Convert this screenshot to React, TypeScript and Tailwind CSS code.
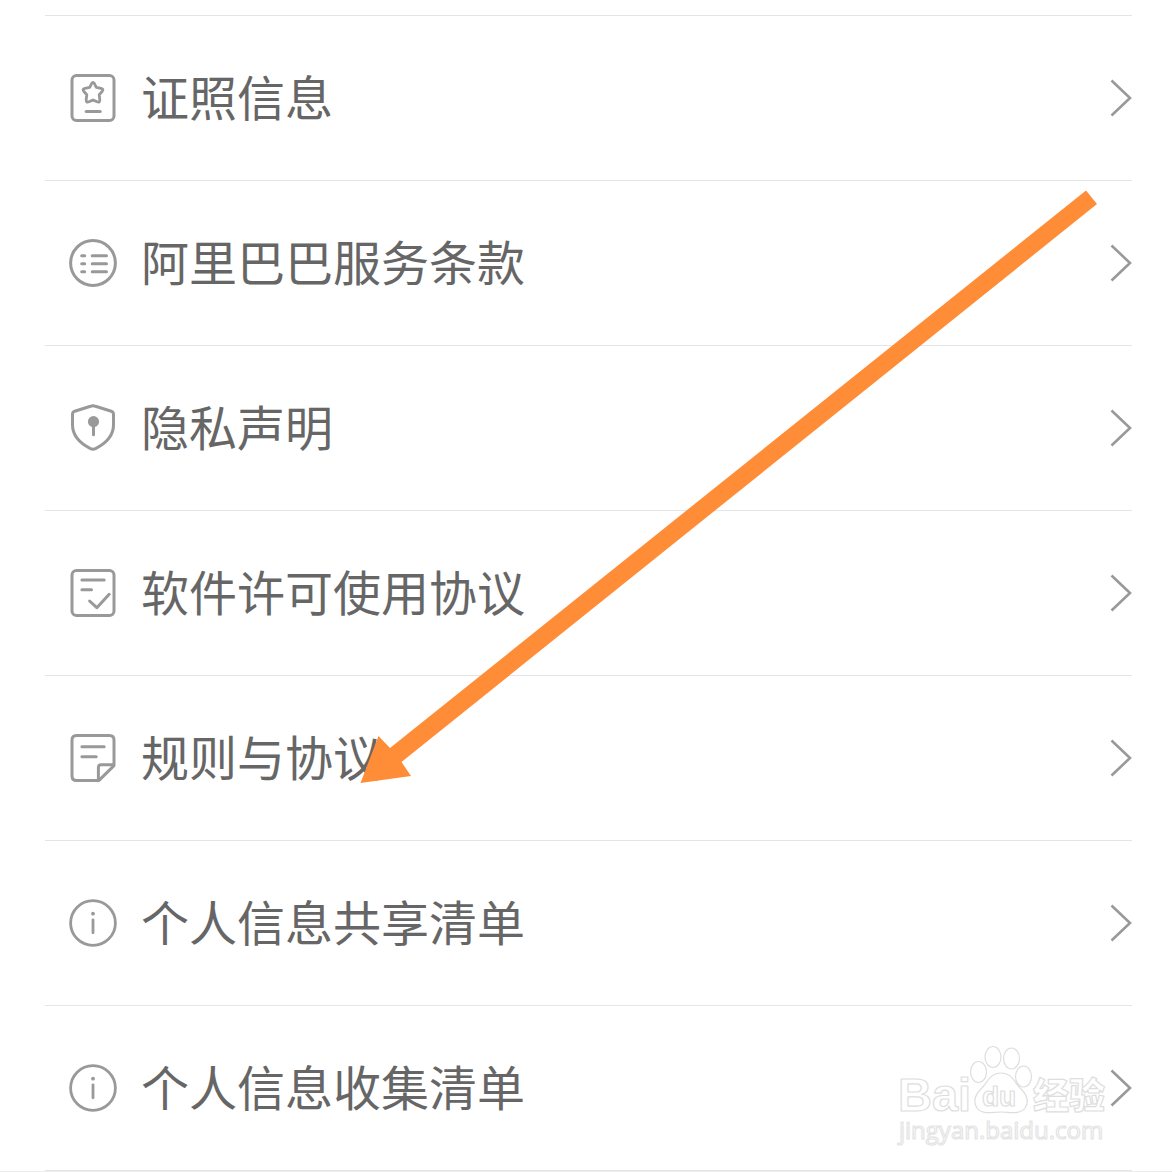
import type { ReactNode } from "react";

type Item = {
  label: string;
  icon: ReactNode;
};

function Icon({ children }: { children: ReactNode }) {
  return (
    <svg
      viewBox="0 0 48 48"
      fill="none"
      stroke="currentColor"
      strokeWidth="3"
      strokeLinecap="round"
      strokeLinejoin="round"
      className="size-12 shrink-0 text-[#999999]"
      aria-hidden="true"
    >
      {children}
    </svg>
  );
}

const licenseIcon = (
  <Icon>
    <rect x="3" y="1.6" width="42" height="44.8" rx="4.5" />
    <path
      strokeWidth="2.8"
      d="M22.7 9.4q1.3-2.2 2.6 0l2 4 4.7.9q3 .7 1.3 2.9l-3.1 3.5.6 5q.1 3.3-2.7 2.1L24 25.9l-4.1 1.9q-2.8 1.2-2.7-2.1l.6-5-3.1-3.5q-1.7-2.2 1.3-2.9l4.7-.9z"
    />
    <path d="M17.2 37.4h14" />
  </Icon>
);

const listIcon = (
  <Icon>
    <circle cx="24" cy="24" r="22.4" />
    <path d="M12.7 16.7h3M23.2 16.7h14.3M12.7 24.7h3M23.2 24.7h14.3M12.7 32.7h3M23.2 32.7h14.3" />
  </Icon>
);

const shieldIcon = (
  <Icon>
    <path d="M21.5 2.3Q24 1.3 26.5 2.3L42.3 7.2Q44.5 8 44.5 10.4V21C44.5 32 36.5 39.5 26.5 44.6Q24 45.8 21.5 44.6C11.5 39.5 3.5 32 3.5 21V10.4Q3.5 8 5.7 7.2Z" />
    <circle cx="24.5" cy="17.6" r="5.6" fill="currentColor" stroke="none" />
    <path d="M24.5 20v10.8" />
  </Icon>
);

const checkIcon = (
  <Icon>
    <rect x="3" y="1.6" width="42" height="44.8" rx="4.5" />
    <path d="M12.9 11.1h22.3M12.9 20.7h9.6M20.6 32l7.2 6.7 12.4-13.4" />
  </Icon>
);

const noteIcon = (
  <Icon>
    <path d="M30 46.4H7.5Q3 46.4 3 41.9V6.1Q3 1.6 7.5 1.6H40.5Q45 1.6 45 6.1V31.6Z" />
    <path d="M29.4 45.5V33.6Q29.4 30.7 32.3 30.7H44.5M12.9 12.7h22.3M12.9 22.7h14.3" />
  </Icon>
);

const infoIcon = (
  <Icon>
    <circle cx="24" cy="24" r="22.4" strokeWidth="2.8" />
    <circle cx="24" cy="14.7" r="1.9" fill="currentColor" stroke="none" />
    <path strokeWidth="2.8" d="M24 20.8v13" />
  </Icon>
);

const items: Item[] = [
  { label: "证照信息", icon: licenseIcon },
  { label: "阿里巴巴服务条款", icon: listIcon },
  { label: "隐私声明", icon: shieldIcon },
  { label: "软件许可使用协议", icon: checkIcon },
  { label: "规则与协议", icon: noteIcon },
  { label: "个人信息共享清单", icon: infoIcon },
  { label: "个人信息收集清单", icon: infoIcon },
];

function Chevron() {
  return (
    <svg
      viewBox="0 0 24 40"
      fill="none"
      stroke="currentColor"
      strokeWidth="2.6"
      className="h-10 w-6 shrink-0 text-[#999999]"
      aria-hidden="true"
    >
      <path d="M3.5 2.5L22 20L3.5 37.5" />
    </svg>
  );
}

function Arrow() {
  return (
    <svg
      viewBox="0 0 740 596"
      className="pointer-events-none absolute left-[359px] top-[189px] h-[596px] w-[740px]"
      aria-hidden="true"
    >
      <path
        fill="#ff8c37"
        d="M1.5 594L19.5 547L31 559L727 1.5L738 15L42.5 573L52 587Z"
      />
    </svg>
  );
}

function Watermark() {
  return (
    <svg
      viewBox="0 0 220 110"
      className="pointer-events-none absolute bottom-[22px] right-[57px] h-[110px] w-[220px]"
      fill="#ffffff"
      stroke="#dedede"
      strokeWidth="1.2"
      strokeLinejoin="round"
    >
      <text x="3" y="72" fontSize="47" fontWeight="700" fontFamily="Liberation Sans, sans-serif">
        Bai
      </text>
      <ellipse cx="83.5" cy="33" rx="8" ry="10.5" />
      <ellipse cx="98" cy="18" rx="8" ry="10.5" />
      <ellipse cx="116.5" cy="19.5" rx="8" ry="10.5" />
      <ellipse cx="128.5" cy="37.5" rx="8" ry="10.5" />
      <path d="M106 34C117 34 119 43 126 50C133 57 134 63 130 69C125 76 115 73 106 73C97 73 87 76 82 69C78 63 79 57 86 50C93 43 95 34 106 34Z" />
      <text x="87" y="67" fontSize="28" fontWeight="700" fontFamily="Liberation Sans, sans-serif">
        du
      </text>
      <text x="138" y="70" fontSize="36" fontWeight="900" fontFamily="Noto Sans CJK SC, sans-serif">
        经验
      </text>
      <text x="4" y="100" fontSize="24" fontWeight="500" stroke="#e4e4e4" fontFamily="Open Sans, sans-serif">
        jingyan.baidu.com
      </text>
    </svg>
  );
}

export default function App() {
  return (
    <main className="relative overflow-hidden border-b border-[#ededed] bg-white pt-[15px] font-['Noto_Sans_CJK_SC',sans-serif]">
      <ul className="ml-[45px] mr-10 border-b border-[#e5e5e5]">
        {items.map((item) => (
          <li key={item.label} className="border-t border-[#e5e5e5]">
            <a href="#" className="flex h-[164px] items-center gap-6 pl-6 text-[#666666]">
              {item.icon}
              <span className="flex-1 pb-1.5 text-5xl">{item.label}</span>
              <Chevron />
            </a>
          </li>
        ))}
      </ul>
      <Arrow />
      <Watermark />
    </main>
  );
}
